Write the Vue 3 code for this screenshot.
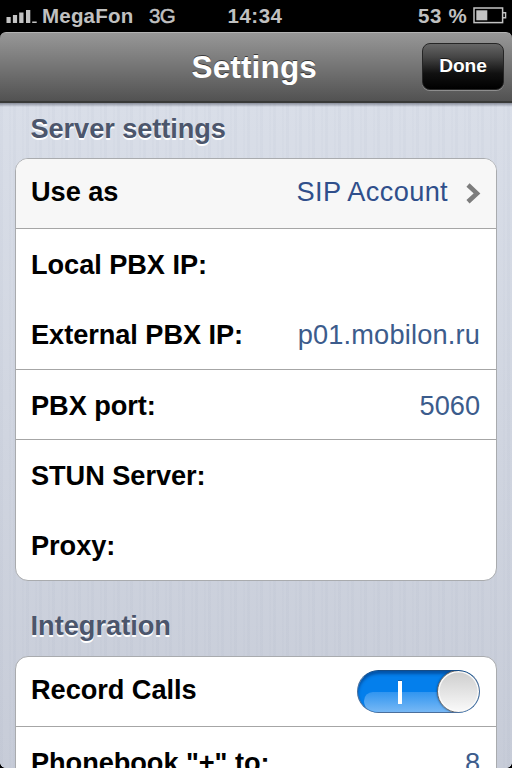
<script setup>
import { ref } from 'vue'

const recordCalls = ref(true)
const serverRows = [
  { label: 'Use as', value: 'SIP Account', link: true, line: true },
  { label: 'Local PBX IP:', value: '' },
  { label: 'External PBX IP:', value: 'p01.mobilon.ru', line: true, host: true },
  { label: 'PBX port:', value: '5060', line: true, port: true },
  { label: 'STUN Server:', value: '' },
  { label: 'Proxy:', value: '' },
]
</script>

<template>
  <div class="screen">
    <header class="status">
      <svg class="signal" width="31" height="15" viewBox="0 0 31 15">
        <path d="M.5 9h4.2v6H.5zM6.9 7h4.2v8H6.900zM13.200 4.500h4.300V15h-4.300zM20 2h4.300v13H20zM26.200 13.600h4.500V15h-4.500z" fill="#c3c3c3" />
      </svg>
      <span class="carrier">MegaFon</span>
      <span class="network">3G</span>
      <span class="clock">14:34</span>
      <span class="percent">53 %</span>
      <svg class="battery" width="34" height="17" viewBox="0 0 34 17">
        <rect x="1" y="1" width="28.6" height="14.6" fill="none" stroke="#c3c3c3" stroke-width="1.5" />
        <path d="M3.300 3.300h11v10h-11z" fill="#c3c3c3" />
        <path d="M30 5.700h2.600v5H30" fill="none" stroke="#c3c3c3" stroke-width="1.4" />
      </svg>
    </header>
    <nav class="navbar">
      <h1 class="title">Settings</h1>
      <button class="done">Done</button>
    </nav>
    <main class="content">
      <h2 class="heading">Server settings</h2>
      <section class="card">
        <div
          v-for="row in serverRows"
          :key="row.label"
          class="row"
          :class="{ line: row.line, link: row.link, host: row.host, port: row.port }"
        >
          <span class="label">{{ row.label }}</span>
          <span class="value">{{ row.value }}</span>
          <svg v-if="row.link" class="chevron" width="15" height="21" viewBox="0 0 15 21">
            <path d="M2 2 11 10.400 2 18.800" fill="none" stroke="#7d7d7d" stroke-width="4.6" />
          </svg>
        </div>
      </section>
      <h2 class="heading second">Integration</h2>
      <section class="card">
        <div class="row line record">
          <span class="label">Record Calls</span>
          <button class="switch" role="switch" :aria-checked="recordCalls">
            <span class="gloss"></span>
            <span class="mark"></span>
            <span class="knob"></span>
          </button>
        </div>
        <div class="row">
          <span class="label">Phonebook "+" to:</span>
          <span class="value">8</span>
        </div>
      </section>
    </main>
    <i class="corner left"></i>
    <i class="corner right"></i>
  </div>
</template>

<style>
body { background: #000; overflow: hidden; }
</style>

<style scoped>
* { box-sizing: border-box; }
.screen {
  position: relative;
  width: 512px;
  height: 768px;
  overflow: hidden;
  display: flex;
  flex-direction: column;
  background: #000;
  font-family: "Liberation Sans", Arial, sans-serif;
}
.status {
  display: grid;
  grid-template-columns: 42px 107px 78.5px 190.5px 55px 1fr;
  height: 32px;
  flex: none;
  color: #c0c0c0;
  font-size: 20.5px;
  font-weight: bold;
  line-height: 32px;
  white-space: nowrap;
}
.signal { margin: 8px 0 0 6px; }
.battery { margin: 7px 0 0; }
.carrier { letter-spacing: 0.2px; }
.clock { letter-spacing: 0.5px; }
.percent { letter-spacing: 0.7px; }
.network { font-weight: normal; letter-spacing: -0.6px; -webkit-text-stroke: 0.5px #c0c0c0; }
.navbar {
  height: 71px;
  flex: none;
  display: grid;
  grid-template-columns: 1fr 82px;
  padding: 10px 8px 0 0;
  border-top: 1px solid #b3b3b3;
  border-bottom: 2px solid #393a38;
  border-radius: 6px 6px 0 0;
  background: linear-gradient(#979797, #525252);
}
.title {
  margin: 0 0 0 191.500px;
  color: #fff;
  font-size: 31.500px;
  line-height: 48px;
  letter-spacing: 0.15px;
  text-shadow: 0 -1.5px 0 rgba(0, 0, 0, 0.55);
}
.done {
  height: 47px;
  padding: 0 0 2px;
  border: 1.5px solid #252525;
  border-radius: 8px;
  background: linear-gradient(#666 0%, #444 30%, #111 65%, #000 100%);
  box-shadow: 0 1px 0 rgba(255, 255, 255, 0.3);
  color: #fff;
  font: bold 19.2px/42px "Liberation Sans", Arial, sans-serif;
  letter-spacing: -0.1px;
  text-shadow: 0 -1px 0 rgba(0, 0, 0, 0.6);
}
.content {
  flex: 1;
  padding: 0 15px;
  overflow: hidden;
  background:
    linear-gradient(rgba(70, 75, 90, 0.55), transparent) 0 0 / 100% 4px no-repeat,
    repeating-linear-gradient(90deg, rgba(100, 115, 145, 0.035) 0 3px, transparent 3px 9px, rgba(100, 115, 145, 0.025) 9px 11px, transparent 11px 13px),
    linear-gradient(#d9dee8, #c7ccd8);
}
.heading {
  height: 55px;
  margin: 0;
  padding: 10px 0 0 15.500px;
  color: #4c566c;
  font-size: 27.2px;
  line-height: 32px;
  letter-spacing: -0.08px;
  text-shadow: 0 1.5px 0 #fff;
}
.heading.second { height: 75px; padding-top: 29px; letter-spacing: 0; }
.card {
  border: 1.5px solid #a9abae;
  border-radius: 13px;
  background: #fff;
  overflow: hidden;
}
.row {
  display: flex;
  align-items: center;
  height: 70.2px;
  padding: 2px 16px 0 15px;
  font-size: 27.2px;
  white-space: nowrap;
}
.line { border-bottom: 1.5px solid #a6a6a6; }
.link { background: #f7f7f7; padding-right: 15px; }
.link, .record { padding-top: 0; }
.link .label, .link .value, .record .label { padding-bottom: 3px; }
.label { color: #000; font-weight: bold; letter-spacing: -0.06px; }
.value { margin-left: auto; color: #3c5c8c; }
.host, .port { padding-top: 3px; }
.host .value { letter-spacing: 0.18px; }
.link .value { color: #304f8b; letter-spacing: 0.35px; }
.chevron { margin-left: 18px; }
.switch {
  position: relative;
  width: 123px;
  height: 43px;
  margin: 0 0 0 auto;
  padding: 0;
  border: 1px solid #4b6f9c;
  border-top-color: #164c86;
  border-radius: 22px;
  background: #047fec;
  box-shadow: inset 0 3px 3px rgba(0, 40, 100, 0.5);
  overflow: hidden;
}
.gloss {
  position: absolute;
  inset: 21px 0 0 6px;
  border-radius: 12px 0 0 15px;
  background: linear-gradient(#3195f0, #77b8f5);
}
.mark {
  position: absolute;
  left: 40px;
  top: 10px;
  width: 4px;
  height: 23px;
  background: #fff;
  box-shadow: 0 -1px 0 #135ea7;
}
.knob {
  position: absolute;
  top: -1px;
  right: -1px;
  width: 43px;
  height: 43px;
  border: 1px solid #666;
  border-radius: 50%;
  background: linear-gradient(#cdcdcd, #fafafa);
  box-shadow: inset 0 0 0 1.5px #fafafa, 0 0 2px rgba(0, 30, 70, 0.7);
}
.corner { position: absolute; bottom: 0; width: 5px; height: 5px; }
.corner.left { left: 0; background: radial-gradient(circle at 100% 0, transparent 4.5px, #000 5px); }
.corner.right { right: 0; background: radial-gradient(circle at 0 0, transparent 4.5px, #000 5px); }
</style>
